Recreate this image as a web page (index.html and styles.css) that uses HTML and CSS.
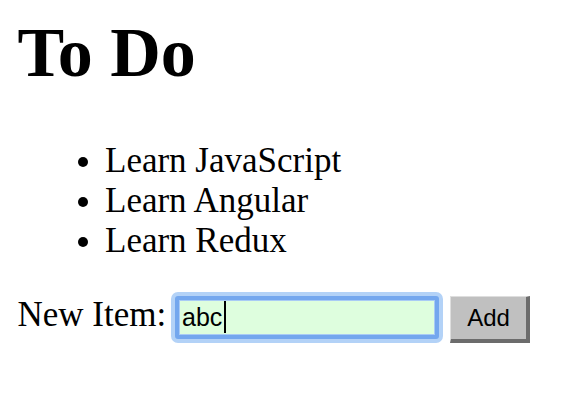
FILE: index.html
```html
<!DOCTYPE html>
<html lang="en">
<head>
<meta charset="utf-8">
<title>To Do</title>
<link rel="stylesheet" href="styles.css">
</head>
<body>
<h1 class="title">To Do</h1>
<ul class="todo-list">
  <li>Learn JavaScript</li>
  <li>Learn Angular</li>
  <li>Learn Redux</li>
</ul>
<form class="add-form">
  <label class="add-label" for="new-item">New Item:</label>
  <span class="input-wrap">
    <input class="add-input" id="new-item" type="text" value="abc">
  </span>
  <button class="add-button" type="button">Add</button>
</form>
</body>
</html>
```
FILE: styles.css
```css
html, body {
  background: #ffffff;
}
body {
  margin: 0;
  padding: 13px 17.5px;
  font-family: "Liberation Serif", "Times New Roman", serif;
  font-size: 35px;
  color: #000;
}
.title {
  font-size: 70px;
  font-weight: bold;
  margin: 0 0 48px;
}
.todo-list {
  margin: 0 0 34px;
  padding-left: 87.5px;
}
.add-form {
  display: flex;
  align-items: baseline;
  margin: 0;
}
.add-label {
  margin-right: 8.8px;
}
.input-wrap {
  position: relative;
  display: inline-flex;
}
.input-wrap::after {
  content: "";
  position: absolute;
  left: 49px;
  top: 5px;
  width: 2px;
  height: 32px;
  background: #000;
}
.add-input {
  box-sizing: border-box;
  width: 264px;
  height: 43px;
  margin: 0;
  padding: 0 2px 0 3px;
  border: 4px solid #74a7ee;
  border-radius: 3px;
  box-shadow: 0 0 0 4px #b3d2f7, inset 0 0 0 1px #a9cbf5;
  background: #defede;
  font-family: "Liberation Sans", Arial, sans-serif;
  font-size: 25px;
  color: #000;
  outline: none;
}
.add-button {
  box-sizing: border-box;
  width: 80px;
  height: 47px;
  margin: 0 0 0 11px;
  padding: 0;
  border-style: solid;
  border-width: 1px 4px 4px 1px;
  border-color: #dedede #6c6c6c #6c6c6c #dedede;
  background: #c0c0c0;
  font-family: "Liberation Sans", Arial, sans-serif;
  font-size: 24px;
  color: #000;
}
```
